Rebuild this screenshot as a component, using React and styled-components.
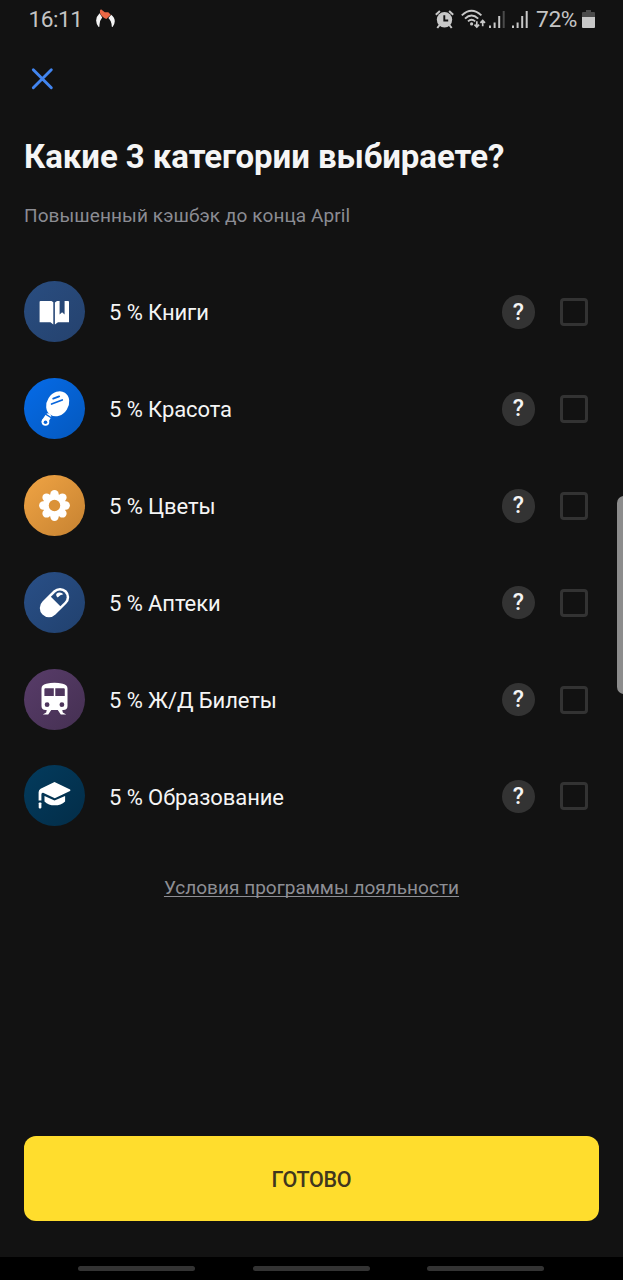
import React from "react";
import styled, { createGlobalStyle } from "styled-components";

const GlobalStyle = createGlobalStyle`
  * { box-sizing: border-box; }
  html, body { margin: 0; background: #121212; }
  body { font-family: Roboto, "Liberation Sans", sans-serif; }
`;

const Screen = styled.div`
  position: relative;
  width: 623px;
  height: 1280px;
  display: flex;
  flex-direction: column;
  background: #121212;
  color: #f5f5f5;
  overflow: hidden;
`;

const StatusBar = styled.header`
  height: 40px;
  padding: 0 28px 2px 28.5px;
  display: flex;
  align-items: center;
  justify-content: space-between;
  color: #c4c4c4;
  flex: none;
`;

const StatusGroup = styled.div`
  display: flex;
  align-items: center;
`;

const StatusText = styled.span`
  margin-left: ${(p) => p.$gap || 0}px;
  padding-top: 2px;
  font-size: 22.7px;
  line-height: 38px;
  letter-spacing: ${(p) => p.$spacing || 0}px;
`;

const Glyph = styled.svg`
  display: block;
  flex: none;
  margin-left: ${(p) => p.$gap || 0}px;
`;

const Toolbar = styled.nav`
  height: 78px;
  padding: 27px 31px;
  flex: none;
`;

const CloseButton = styled.button`
  display: block;
  padding: 0;
  border: 0;
  background: none;
`;

const Heading = styled.div`
  padding: 18px 24px 0;
  height: 145px;
  flex: none;
`;

const Title = styled.h1`
  margin: 0;
  font-size: 33px;
  line-height: 42px;
  font-weight: 700;
  white-space: nowrap;
  letter-spacing: -0.07px;
`;

const Subtitle = styled.p`
  margin: 26px 0 0;
  font-size: 19px;
  line-height: 24px;
  color: #8b8c93;
  letter-spacing: 0.09px;
`;

const CategoryList = styled.ul`
  list-style: none;
  margin: 0;
  padding: 0 35px 0 24px;
  flex: none;
`;

const CategoryRow = styled.li`
  height: 96.9px;
  display: flex;
  align-items: center;
`;

const Badge = styled.div`
  width: 61px;
  height: 61px;
  border-radius: 50%;
  flex: none;
  background: linear-gradient(135deg, ${(p) => p.$from}, ${(p) => p.$to});
`;

const CategoryName = styled.span`
  flex: 1;
  margin-left: 24px;
  padding-top: 4px;
  font-size: 22px;
  line-height: 30px;
  letter-spacing: -0.08px;
`;

const HelpButton = styled.button`
  width: 33.5px;
  height: 33.5px;
  margin-top: 1.2px;
  padding: 1px 0 0;
  border: 0;
  border-radius: 50%;
  background: #333;
  color: #f5f5f5;
  font: 500 23px/32px Roboto, sans-serif;
  text-align: center;
`;

const Checkbox = styled.div`
  width: 28px;
  height: 28px;
  margin: 1.2px 0 0 25px;
  border: 3px solid #333;
  border-radius: 4px;
`;

const Terms = styled.a`
  margin-top: 32px;
  align-self: center;
  font-size: 19px;
  line-height: 24px;
  color: #8d8e94;
  text-decoration: underline;
  text-decoration-thickness: 1px;
  text-underline-offset: 2px;
  text-decoration-skip-ink: none;
  letter-spacing: 0.02px;
`;

const Footer = styled.footer`
  margin-top: auto;
  padding: 0 24px 36px;
`;

const DoneButton = styled.button`
  display: block;
  width: 575px;
  height: 85px;
  border: 0;
  border-radius: 12px;
  background: #ffdd2d;
  color: #40361e;
  font: 500 21.5px/30px Roboto, sans-serif;
  letter-spacing: -0.3px;
  padding: 2px 0 0;
`;

const NavBar = styled.div`
  height: 23px;
  flex: none;
  display: flex;
  justify-content: center;
  align-items: center;
  gap: 57.3px;
  padding-right: 0.5px;
  background: #000;
`;

const NavHandle = styled.span`
  width: 117px;
  height: 5.5px;
  border-radius: 3px;
  background: #333;
`;

const EdgePanel = styled.div`
  position: absolute;
  right: -8px;
  top: 496px;
  width: 14.5px;
  height: 198px;
  border-radius: 8px;
  background: #8c8c8c;
`;

const BookIcon = () => (
  <svg width="61" height="61" viewBox="0 0 61 61" fill="#fff">
    <path d="M16.5 20H27.5L29.3 21.2V43.5L26.5 41.3H15.6V21Q15.6 20 16.5 20Z" />
    <path d="M30.9 21.4L33 20H35.6V33.6L38.1 31.2L40.6 33.6V20H44.2Q45 20 45 21V41.3H34L30.9 43.5Z" />
  </svg>
);

const MirrorIcon = () => (
  <svg width="61" height="61" viewBox="0 0 61 61">
    <ellipse cx="33.7" cy="25.8" rx="10.8" ry="13.2" transform="rotate(33 33.7 25.8)" fill="#fff" />
    <path d="M29.2 20.6L35.2 18.4M27.6 26L38.2 22" stroke="#0765dc" strokeWidth="1.8" strokeLinecap="round" />
    <path d="M24 38.6L20.8 43.5" stroke="#fff" strokeWidth="6.2" strokeLinecap="round" />
    <circle cx="21.5" cy="44" r="3.8" fill="#fff" />
    <circle cx="21.5" cy="44.2" r="1.8" fill="#0765dc" />
    <path d="M20 35.1L28 40.3" stroke="#0765dc" strokeWidth="1.3" />
  </svg>
);

const PETALS = [0, 45, 90, 135, 180, 225, 270, 315];

const FlowerIcon = () => (
  <svg width="61" height="61" viewBox="0 0 61 61">
    <g fill="#fff">
      <circle cx="30.5" cy="30.5" r="11.5" />
      {PETALS.map((angle) => (
        <circle key={angle} cx="30.5" cy="19.3" r="4.2" transform={`rotate(${angle} 30.5 30.5)`} />
      ))}
    </g>
    <circle cx="30.5" cy="30.5" r="5.7" fill="#db9238" />
  </svg>
);

const PillIcon = () => (
  <svg width="61" height="61" viewBox="0 0 61 61">
    <g transform="rotate(45 30.5 30.6)">
      <rect x="21.3" y="13.6" width="18.4" height="34" rx="9.2" fill="#fff" />
      <path d="M23.8 29V22.9A6.7 6.7 0 0 1 37.2 22.9V29Z" fill="#254a7d" />
      <path d="M25.6 23.3A5 5 0 0 1 30.8 18.4Q28.6 20.8 29.2 24.8Q26.8 25 25.6 23.3Z" fill="#fff" />
    </g>
  </svg>
);

const TrainIcon = () => (
  <svg width="61" height="61" viewBox="0 0 61 61" fill="#fff">
    <path
      fillRule="evenodd"
      d="M22.3 14.7Q30.5 12.8 38.7 14.7Q43.5 15.8 43.5 19.5V37Q43.5 41 39.3 41H21.7Q17.5 41 17.5 37V19.5Q17.5 15.8 22.3 14.7ZM20.4 20.2V26.9H29.8V19.2H21.4Q20.4 19.2 20.4 20.2ZM31.3 19.2V26.9H40.8V20.2Q40.8 19.2 39.8 19.2ZM23.1 33.3A2.4 2.4 0 1 0 23.1 38.1A2.4 2.4 0 1 0 23.1 33.3ZM37.9 33.3A2.4 2.4 0 1 0 37.9 38.1A2.4 2.4 0 1 0 37.9 33.3Z"
    />
    <path d="M22.8 40.5H27.6L24.2 45.6H18.8L22.2 43.5ZM38.2 40.5H33.4L36.8 45.6H42.2L38.8 43.5Z" />
  </svg>
);

const GraduationIcon = () => (
  <svg width="61" height="61" viewBox="0 0 61 61" fill="#fff">
    <path d="M30.5 17L46.1 24.4Q46.9 25.2 46 26L30.8 33.2L19.1 27.8Q17.4 27.6 17.4 29.5V35.5H14.6V27.3Q14.6 25 16.6 23.8Z" />
    <path d="M20.5 31L30.5 35.5L41.1 31V36.4Q37 40.3 30.6 40.3Q24.5 40.3 20.5 36.4Z" />
    <rect x="14.7" y="37.5" width="2.7" height="5.9" rx="0.8" />
  </svg>
);

const PawIcon = () => (
  <Glyph width="22" height="20" viewBox="0 0 22 20" $gap={12}>
    <path d="M4.6 4.2Q-1.8 10.5 3.6 18Q4.6 17.8 4.5 17Q4.1 12 7.2 8.4ZM16.2 5.8Q22.6 11 17.6 18Q16.6 17.8 16.7 17Q16.6 12.2 13.4 9Z" fill="#f4f4f4" />
    <path d="M6 .2L9.8 3.2L13.3 3.2L15.7 5.8L11.4 10Q6.6 7.9 5 3.9Q4.4 1 6 .2Z" fill="#ec6846" />
  </Glyph>
);

const AlarmIcon = () => (
  <Glyph width="19" height="19" viewBox="0 0 19 19">
    <circle cx="9.5" cy="9.8" r="7.7" fill="#c8c8c8" />
    <path d="M.8 4.7L4.9 1M18.2 4.7L14.1 1M4.6 15L2.3 18M14.4 15L16.7 18" stroke="#c8c8c8" strokeWidth="2" />
    <path d="M9.3 5.2V10.5H13.2" fill="none" stroke="#121212" strokeWidth="1.9" />
  </Glyph>
);

const WifiIcon = () => (
  <Glyph width="25" height="20" viewBox="0 0 25 20" $gap={7}>
    <g fill="none" stroke="#c8c8c8" strokeWidth="1.9">
      <path d="M.8 6.4Q10.5-2.8 20.4 6.4M4 9.6Q10.5 3.3 17.2 9.6M7 12.4Q10.5 9.2 14.2 12.4" />
      <path d="M15.8 12.2V17.8M13.5 15.7L15.8 18L18.1 15.7M21.7 17.2V11.7M19.4 13.8L21.7 11.5L24 13.8" strokeWidth="1.7" />
    </g>
    <circle cx="10.6" cy="14.9" r="1.6" fill="#c8c8c8" />
  </Glyph>
);

const SignalIcon = ({ gap, last }) => (
  <Glyph width="16" height="17" viewBox="0 0 16 17" $gap={gap}>
    <path d="M0 14.5H2V17H0ZM4.6 11.5H6.6V17H4.6ZM9.2 5H11.2V17H9.2Z" fill="#c8c8c8" />
    <path d="M13.7 0H15.7V17H13.7Z" fill={last} />
  </Glyph>
);

const BatteryIcon = () => (
  <Glyph width="13" height="18" viewBox="0 0 13 18" $gap={5}>
    <path d="M4 0H9V2H12Q13 2 13 3V7H0V3Q0 2 1 2H4Z" fill="#4b4b4b" />
    <path d="M0 7H13V17Q13 18 12 18H1Q0 18 0 17Z" fill="#c8c8c8" />
  </Glyph>
);

const CATEGORIES = [
  { name: "Книги", from: "#294d80", to: "#25426e", Icon: BookIcon },
  { name: "Красота", from: "#056be8", to: "#0558bd", Icon: MirrorIcon },
  { name: "Цветы", from: "#f0a444", to: "#c68231", Icon: FlowerIcon },
  { name: "Аптеки", from: "#294f87", to: "#21416e", Icon: PillIcon },
  { name: "Ж/Д Билеты", from: "#583c69", to: "#453052", Icon: TrainIcon },
  { name: "Образование", from: "#033b5d", to: "#032d48", Icon: GraduationIcon },
];

export default function App() {
  return (
    <>
      <GlobalStyle />
      <Screen>
        <StatusBar>
          <StatusGroup>
            <StatusText $spacing={-0.5}>16:11</StatusText>
            <PawIcon />
          </StatusGroup>
          <StatusGroup>
            <AlarmIcon />
            <WifiIcon />
            <SignalIcon gap={3} last="#4b4b4b" />
            <SignalIcon gap={7} last="#c8c8c8" />
            <StatusText $gap={8} $spacing={-0.4}>72%</StatusText>
            <BatteryIcon />
          </StatusGroup>
        </StatusBar>
        <Toolbar>
          <CloseButton aria-label="Закрыть">
            <Glyph width="23" height="23" viewBox="0 0 23 23">
              <path d="M2.3 2.7L20.3 20.7M20.3 2.7L2.3 20.7" stroke="#4285f0" strokeWidth="2.9" strokeLinecap="round" />
            </Glyph>
          </CloseButton>
        </Toolbar>
        <Heading>
          <Title>Какие 3 категории выбираете?</Title>
          <Subtitle>Повышенный кэшбэк до конца April</Subtitle>
        </Heading>
        <CategoryList>
          {CATEGORIES.map(({ name, from, to, Icon }) => (
            <CategoryRow key={name}>
              <Badge $from={from} $to={to}>
                <Icon />
              </Badge>
              <CategoryName>5 % {name}</CategoryName>
              <HelpButton>?</HelpButton>
              <Checkbox role="checkbox" aria-checked="false" />
            </CategoryRow>
          ))}
        </CategoryList>
        <Terms>Условия программы лояльности</Terms>
        <Footer>
          <DoneButton>ГОТОВО</DoneButton>
        </Footer>
        <NavBar>
          <NavHandle />
          <NavHandle />
          <NavHandle />
        </NavBar>
        <EdgePanel />
      </Screen>
    </>
  );
}
